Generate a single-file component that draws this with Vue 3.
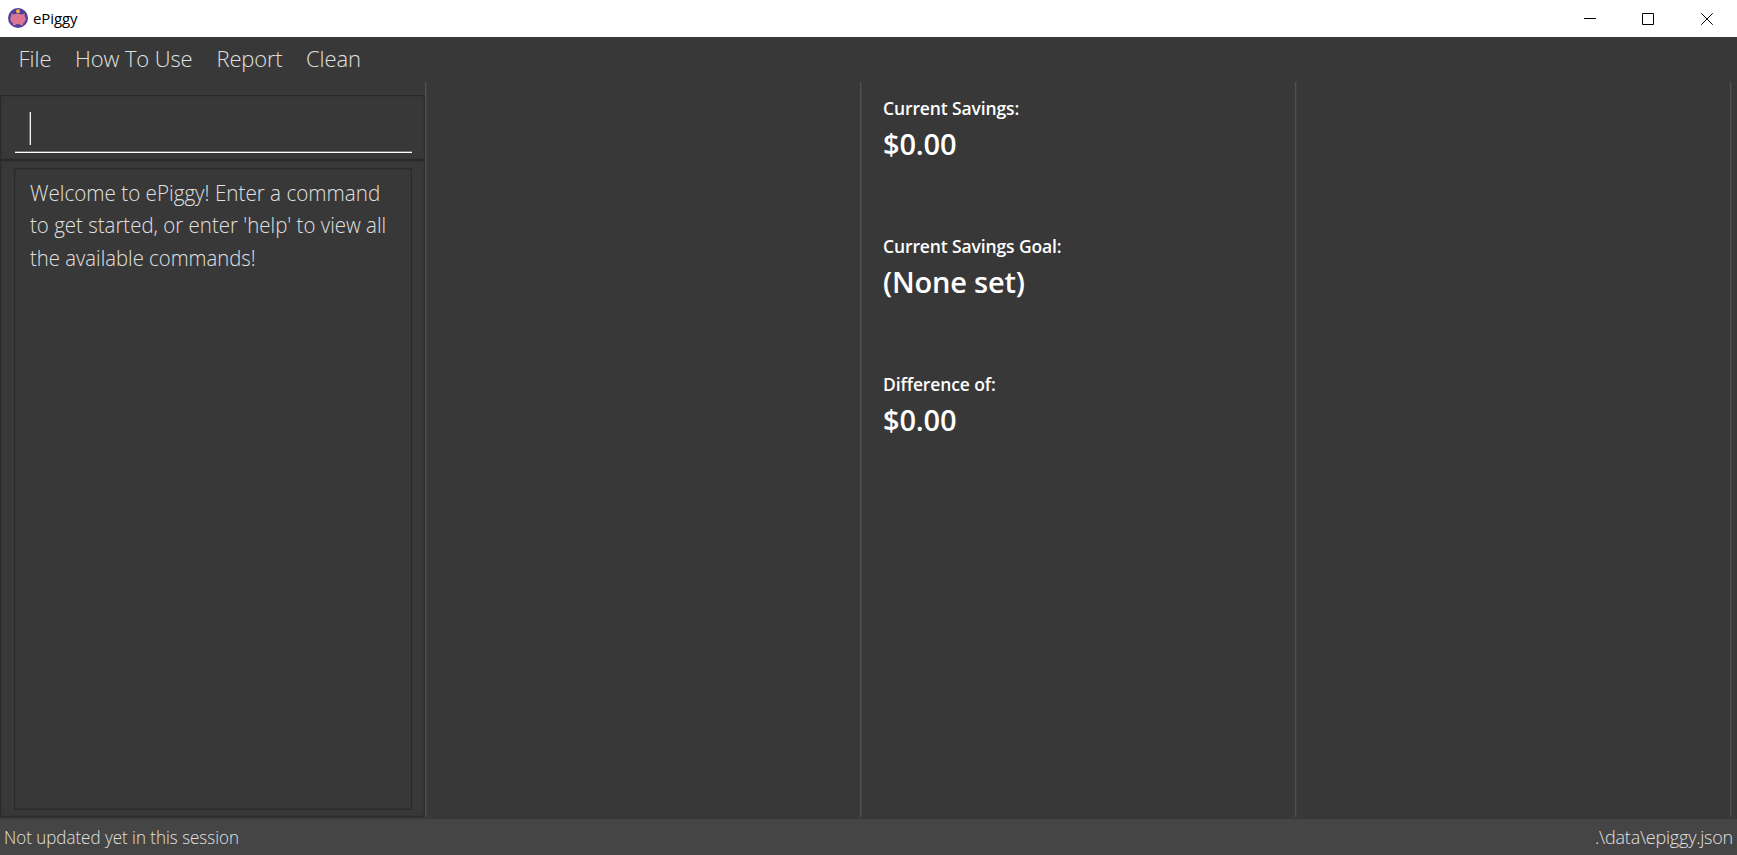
<script setup>
const menus = [
  { label: 'File', cls: 'file' },
  { label: 'How To Use', cls: 'how' },
  { label: 'Report', cls: 'report' },
  { label: 'Clean', cls: 'clean' },
]
const stats = [
  { label: 'Current Savings:', value: '$0.00' },
  { label: 'Current Savings Goal:', value: '(None set)' },
  { label: 'Difference of:', value: '$0.00' },
]
const message = [
  'Welcome to ePiggy! Enter a command',
  "to get started, or enter 'help' to view all",
  'the available commands!',
]
</script>

<template>
  <div class="window">
    <header class="titlebar">
      <svg class="logo" width="20" height="20" viewBox="0 0 20 20">
        <circle cx="10" cy="10" r="10" fill="#4f3f9b" />
        <path d="M3 5.2 L5.6 6.4 Q10 5.2 14 6.4 L16.8 5.2 L16.6 8 Q18 9.6 17.8 11.6 Q17.2 14 15.4 15 L14.8 17.2 H12.4 L12 16.3 H8 L7.4 17.2 H5 L4.6 15 Q2.2 13.4 2.2 10.8 Q2.4 9 3.4 7.8 Z" fill="#dc7495" />
        <circle cx="10" cy="3.2" r="2" fill="#f2b53c" />
      </svg>
      <span class="title">ePiggy</span>
      <div class="controls">
        <svg width="12" height="12" viewBox="0 0 12 12"><path d="M0 5.5H12" /></svg>
        <svg width="12" height="12" viewBox="0 0 12 12"><path d="M.5 .5H11.5V11.5H.5Z" /></svg>
        <svg width="12" height="12" viewBox="0 0 12 12"><path d="M.3 .3L11.7 11.7M11.7 .3L.3 11.7" /></svg>
      </div>
    </header>
    <nav class="menubar">
      <span v-for="m in menus" :key="m.label" class="menu" :class="m.cls">{{ m.label }}</span>
    </nav>
    <main class="content">
      <section class="column command">
        <div class="command-box">
          <div class="field"><i class="caret"></i></div>
        </div>
        <div class="result-box">
          <div class="result">
            <div v-for="(line, i) in message" :key="i"><span class="line" :class="'m' + (i + 1)">{{ line }}</span></div>
          </div>
        </div>
      </section>
      <section class="column"></section>
      <section class="column stats">
        <div v-for="s in stats" :key="s.label" class="stat">
          <div class="label">{{ s.label }}</div>
          <div class="value">{{ s.value }}</div>
        </div>
      </section>
      <section class="column"></section>
    </main>
    <footer class="statusbar">
      <span class="s1">Not updated yet in this session</span>
      <span class="s2">.\data\epiggy.json</span>
    </footer>
  </div>
</template>

<style>
body { margin: 0; background: #383838; }
</style>

<style scoped>
* { box-sizing: border-box; }
.window {
  width: 1737px; height: 855px; overflow: hidden; background: #383838; color: #e0e0e0;
  display: flex; flex-direction: column; white-space: nowrap;
  font-family: "Open Sans", "Noto Sans", sans-serif; font-weight: 300;
}
.titlebar { flex: none; height: 37px; background: #fff; display: flex; align-items: center; padding-left: 8px; }
.logo { margin-top: -1px; }
.title { margin: -2px 0 0 5px; color: #000; font: 400 15px/20px "Open Sans", sans-serif; letter-spacing: -0.1px; }
.controls { margin-left: auto; display: flex; gap: 47px; padding-right: 24px; }
.controls svg { stroke: #000; stroke-width: 1; fill: none; }
.controls svg:first-child { margin-right: -1px; }
.menubar { flex: none; height: 45px; display: flex; gap: 24px; padding-left: 18.5px; font-size: 22px; line-height: 42px; }
.how { letter-spacing: -0.12px; margin-left: -0.5px; }
.report { letter-spacing: -0.18px; }
.clean { letter-spacing: -0.1px; margin-left: -0.5px; }
.content { flex: none; height: 737px; display: flex; padding-bottom: 2px; }
.column { width: 435px; flex: none; border-right: 1px solid #505050; box-shadow: 1px 0 #414141; }
.command { width: 426px; padding-top: 13px; display: flex; flex-direction: column; }
.command-box { height: 65px; border: 1px solid #2a2a2a; padding: 0 12px 0 14px; box-shadow: inset 0 0 0 1px #343434; }
.field { height: 57px; border-bottom: 1px solid #fff; padding: 16px 0 0 15px; box-shadow: inset 0 -1px #777; }
.caret { display: block; width: 1px; height: 33px; background: #f0f0f0; box-shadow: -1px 0 #777; }
.result-box { flex: 1; border: 1px solid #2a2a2a; padding: 7px 12px 6px 13px; box-shadow: inset 0 0 0 1px #343434; }
.result { height: 100%; border: 1px solid #2a2a2a; padding: 6.5px 0 0 15px; font-size: 22px; line-height: 32.7px; color: #e0e0e0; box-shadow: inset 0 0 0 1px #343434; }
.line { display: inline-block; vertical-align: top; transform-origin: 0 50%; }
.m1 { transform: scaleX(0.938); }
.m2 { transform: scaleX(0.93); }
.m3 { transform: scaleX(0.923); }
.stats { padding: 14px 0 0 22px; color: #fff; font-weight: 600; }
.stat { height: 138px; }
.label { font-size: 17.5px; line-height: 24px; letter-spacing: -0.12px; }
.value { font-size: 29px; line-height: 48px; letter-spacing: -0.2px; }
.statusbar { flex: none; height: 36px; background: #454545; display: flex; justify-content: space-between; padding: 0 4px; font-size: 18px; line-height: 37px; }
.s1 { transform: scaleX(0.942); transform-origin: 0 50%; }
.s2 { letter-spacing: -0.22px; }
</style>
